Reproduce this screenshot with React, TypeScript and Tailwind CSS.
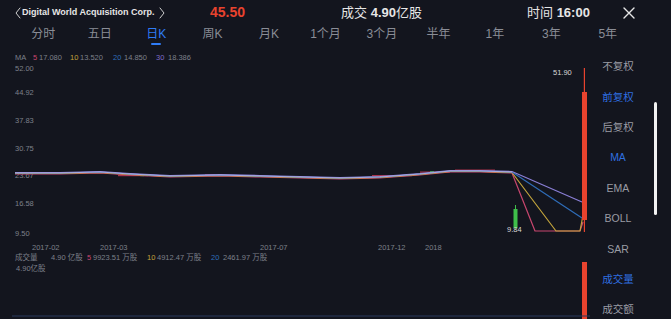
import React from "react";

const FONT = '"Liberation Sans","Noto Sans CJK SC",sans-serif';
const OFF = 48;

function pts(arr: [number, number][]) {
  return arr.map(([x, y]) => `${x},${y - OFF}`).join(" ");
}

const base: [number, number][] = [
  [15, 173], [60, 173], [100, 172], [130, 174], [170, 176], [220, 175], [260, 176],
  [300, 177], [340, 178], [380, 177], [420, 174], [450, 171], [480, 171], [512, 172],
];

function shift(arr: [number, number][], dy: number, extra: [number, number][]): [number, number][] {
  return [...arr.map(([x, y]) => [x, y + dy] as [number, number]), ...extra];
}

const Chart = () => {
  const t = { fontFamily: FONT } as React.CSSProperties;
  const gray = "#7d808a";
  return (
    <svg width={597} height={271} viewBox="0 0 597 271" className="block">
      <g style={t} fontSize={7.5} fill={gray}>
        <text x={15} y={12}>MA</text>
        <text x={33} y={12} fill="#c8466e">5</text>
        <text x={39} y={12}>17.080</text>
        <text x={70} y={12} fill="#c2a43c">10</text>
        <text x={80} y={12}>13.520</text>
        <text x={113} y={12} fill="#2f6db8">20</text>
        <text x={124} y={12}>14.850</text>
        <text x={156} y={12} fill="#7e6cc8">30</text>
        <text x={168} y={12}>18.386</text>

        <text x={15} y={23}>52.00</text>
        <text x={15} y={47}>44.92</text>
        <text x={15} y={75}>37.83</text>
        <text x={15} y={103}>30.75</text>
        <text x={15} y={130}>23.67</text>
        <text x={15} y={158}>16.58</text>
        <text x={15} y={188}>9.50</text>

        <text x={32} y={202}>2017-02</text>
        <text x={100} y={202}>2017-03</text>
        <text x={260} y={202}>2017-07</text>
        <text x={378} y={202}>2017-12</text>
        <text x={425} y={202}>2018</text>

        <text x={15} y={212}>成交量</text>
        <text x={51} y={212}>4.90 亿股</text>
        <text x={87} y={212} fill="#c8466e">5</text>
        <text x={93} y={212}>9923.51 万股</text>
        <text x={147} y={212} fill="#c2a43c">10</text>
        <text x={157} y={212}>4912.47 万股</text>
        <text x={211} y={212} fill="#2f6db8">20</text>
        <text x={223} y={212}>2461.97 万股</text>
        <text x={16} y={223}>4.90亿股</text>
      </g>

      {/* candle marks along the flat line */}
      <g fill="#a8324a">
        <rect x={60} y={172 - OFF} width={8} height={1} />
        <rect x={118} y={175 - OFF} width={30} height={1.2} />
        <rect x={205} y={174 - OFF} width={10} height={1} />
        <rect x={372} y={175 - OFF} width={40} height={1.2} />
        <rect x={420} y={171.5 - OFF} width={30} height={1.2} />
        <rect x={455} y={169.5 - OFF} width={40} height={1.2} />
      </g>
      <g fill="#3f9a52">
        <rect x={140} y={175 - OFF} width={4} height={1.2} />
        <rect x={290} y={176 - OFF} width={5} height={1.2} />
        <rect x={430} y={171 - OFF} width={4} height={1.2} />
      </g>

      <g fill="none" strokeWidth={1.2} strokeLinejoin="round">
        <polyline stroke="#c8466e" points={pts(shift(base, 1, [[535, 231], [580, 231], [583, 222]]))} />
        <polyline stroke="#c2a43c" points={pts(shift(base, 0.5, [[556, 231], [580, 231], [583, 215]]))} />
        <polyline stroke="#2f6db8" points={pts(shift(base, 0, [[582, 218]]))} />
        <polyline stroke="#8a7fd6" points={pts(shift(base, -0.5, [[582, 202]]))} />
        <polyline stroke="#b9bde8" strokeWidth={0.8} points={pts(shift(base, 0, []))} />
      </g>

      {/* green candle */}
      <rect x={515} y={205 - OFF} width={1} height={24} fill="#3fbf4a" />
      <rect x={513.5} y={209 - OFF} width={4} height={19} fill="#3fbf4a" />
      <text x={507} y={232 - OFF} fontSize={7.5} fill="#d8d8d8" style={t}>9.84</text>

      {/* red candle */}
      <rect x={583.8} y={68 - OFF} width={1.2} height={164} fill="#e8432e" />
      <rect x={582} y={92 - OFF} width={5} height={128} fill="#e8432e" />
      <text x={553} y={75 - OFF} fontSize={7.5} fill="#d8d8d8" style={t}>51.90</text>

      {/* volume bar */}
      <rect x={582} y={262 - OFF} width={5} height={60} fill="#e8432e" />
      <line x1={12} y1={316 - OFF} x2={590} y2={316 - OFF} stroke="#2a3b5c" strokeWidth={1} />
    </svg>
  );
};

const tabs = ["分时", "五日", "日K", "周K", "月K", "1个月", "3个月", "半年", "1年", "3年", "5年"];
const side: [string, boolean][] = [
  ["不复权", false], ["前复权", true], ["后复权", false], ["MA", true], ["EMA", false],
  ["BOLL", false], ["SAR", false], ["成交量", true], ["成交额", false],
];

const Chevron = ({ dir }: { dir: "l" | "r" }) => (
  <svg width="6" height="12" viewBox="0 0 6 12" className="shrink-0">
    <path
      d={dir === "l" ? "M5 1L1 6L5 11" : "M1 1L5 6L1 11"}
      fill="none"
      stroke="#cfcfcf"
      strokeWidth="1"
      strokeLinecap="round"
      strokeLinejoin="round"
    />
  </svg>
);

export default function App() {
  return (
    <div
      className="w-[671px] h-[319px] overflow-hidden bg-[#13151e] text-white"
      style={{ fontFamily: FONT }}
    >
      {/* header */}
      <div className="h-[25px] flex items-center">
        <div className="ml-[15px] w-[150px] flex items-center gap-[1px] whitespace-nowrap text-[9px] font-bold text-[#e6e6e6]">
          <Chevron dir="l" />
          <span>Digital World Acquisition Corp.</span>
          <span className="ml-[3px]"><Chevron dir="r" /></span>
        </div>
        <div className="ml-[45px] text-[14px] text-[#e8432e] font-bold">45.50</div>
        <div className="ml-[96px] text-[13px] font-bold text-[#e6e6e6] whitespace-nowrap">
          <span className="font-normal">成交</span> 4.90<span className="font-normal">亿股</span>
        </div>
        <div className="ml-[105px] text-[13px] font-bold text-[#e6e6e6] whitespace-nowrap">
          <span className="font-normal">时间</span> 16:00
        </div>
        <div className="ml-[33px]">
          <svg width="12" height="12" viewBox="0 0 12 12" className="block">
            <path d="M1 1L11 11M11 1L1 11" stroke="#e6e6e6" strokeWidth="1.4" strokeLinecap="round" />
          </svg>
        </div>
      </div>

      {/* tabs */}
      <div className="ml-[15px] w-[621px] h-[23px] grid grid-cols-11">
        {tabs.map((tb) => (
          <div key={tb} className="relative flex justify-center items-start pt-[1px]">
            <span className={`text-[12px] leading-[16px] ${tb === "日K" ? "text-[#2f7cf6]" : "text-[#8a8d96]"}`}>
              {tb}
            </span>
            {tb === "日K" && (
              <span className="absolute bottom-[3px] left-1/2 -translate-x-1/2 w-[10px] h-[2px] rounded-full bg-[#2f7cf6]" />
            )}
          </div>
        ))}
      </div>

      <div className="flex">
        <Chart />
        <div className="w-[42px] flex flex-col pt-[4px]">
          {side.map(([s, on]) => (
            <div
              key={s}
              className={`h-[30.4px] flex items-center justify-center text-[10.5px] ${on ? "text-[#2f6fe0]" : "text-[#9a9ca4]"}`}
            >
              {s}
            </div>
          ))}
        </div>
        <div className="flex-1 flex justify-center">
          <div className="mt-[54px] w-[3px] h-[113px] rounded-full bg-[#f2f2f2]" />
        </div>
      </div>
    </div>
  );
}
